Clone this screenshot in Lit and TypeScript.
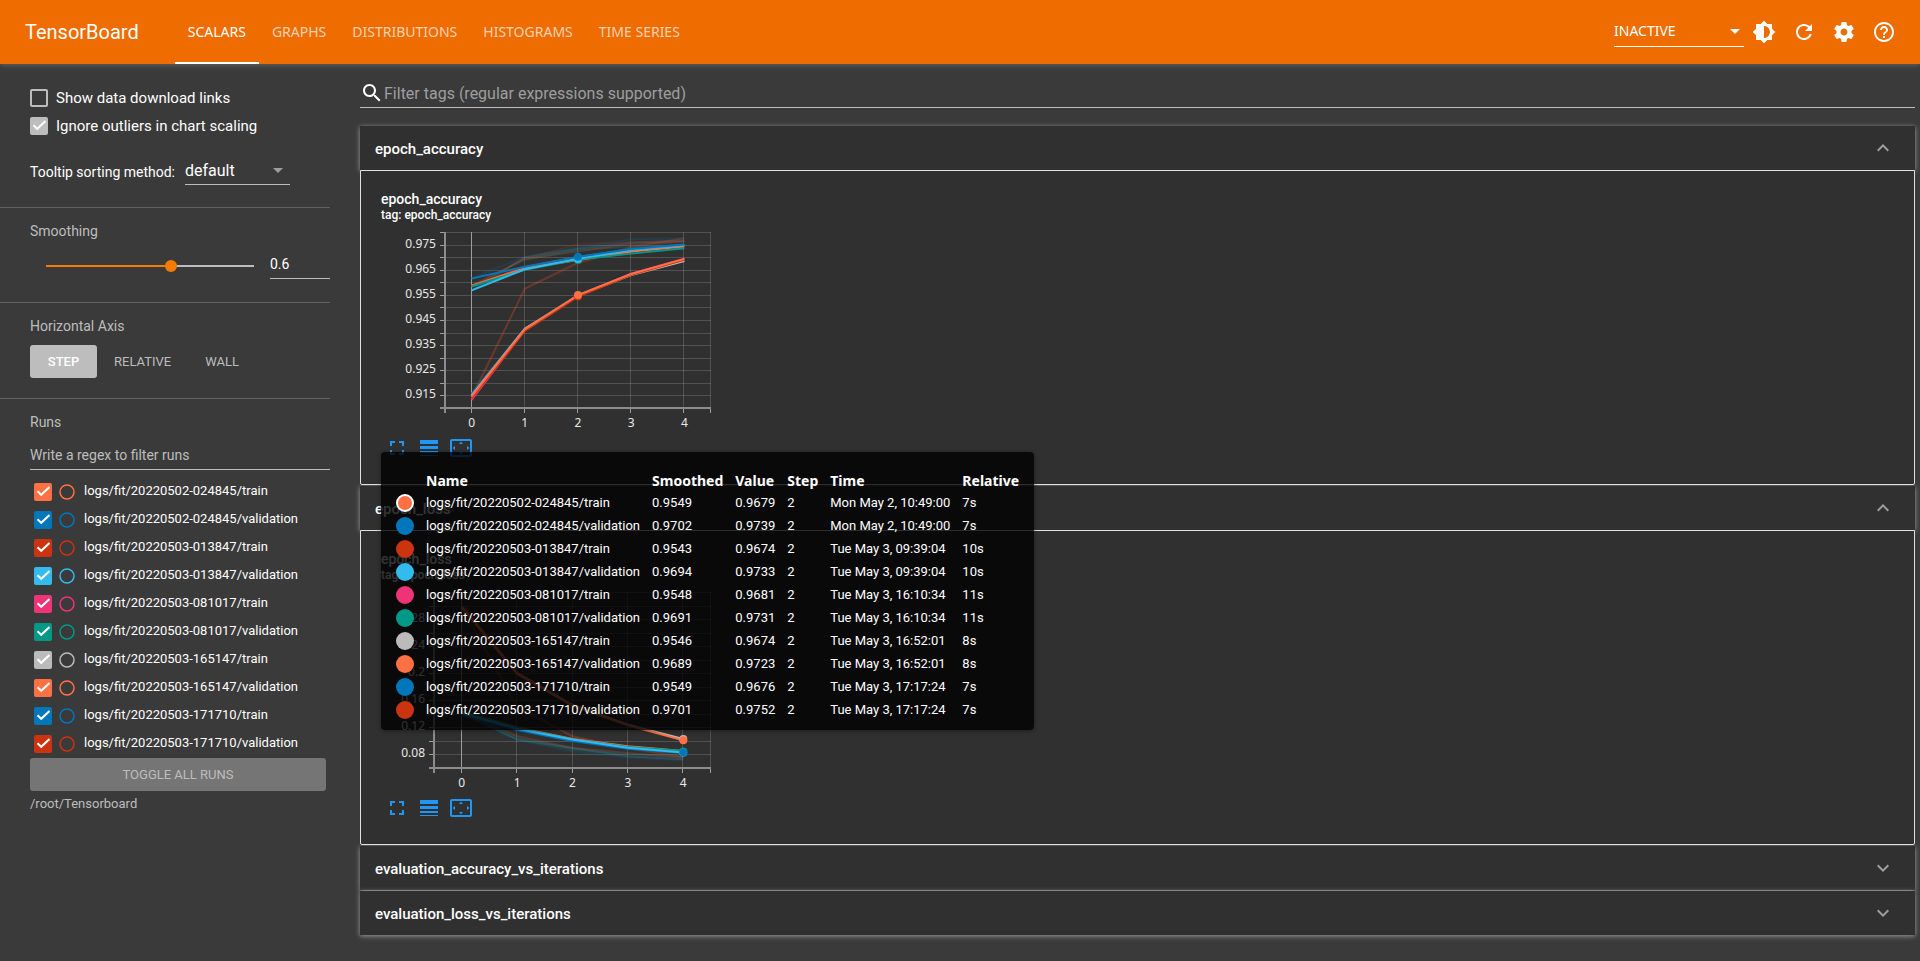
import { LitElement, html, svg, css, nothing } from "lit";
import { customElement, property, state } from "lit/decorators.js";
import { classMap } from "lit/directives/class-map.js";

interface Run {
  name: string;
  color: string;
  smoothed: string;
  value: string;
  time: string;
  relative: string;
}

interface Series {
  color: string;
  values: number[];
  faint?: boolean;
}

interface ChartSpec {
  left: number;
  min: number;
  max: number;
  grid: number;
  labels: string[];
  series: Series[];
  marks: { step: number; value: number; color: string }[];
}

const ORANGE = "#ff7043";
const BLUE = "#0077bb";
const RED = "#cc3311";
const CYAN = "#33bbee";
const PINK = "#ee3377";
const TEAL = "#009988";
const GREY = "#bbbbbb";

const RUNS: Run[] = [
  { name: "logs/fit/20220502-024845/train", color: ORANGE, smoothed: "0.9549", value: "0.9679", time: "Mon May 2, 10:49:00", relative: "7s" },
  { name: "logs/fit/20220502-024845/validation", color: BLUE, smoothed: "0.9702", value: "0.9739", time: "Mon May 2, 10:49:00", relative: "7s" },
  { name: "logs/fit/20220503-013847/train", color: RED, smoothed: "0.9543", value: "0.9674", time: "Tue May 3, 09:39:04", relative: "10s" },
  { name: "logs/fit/20220503-013847/validation", color: CYAN, smoothed: "0.9694", value: "0.9733", time: "Tue May 3, 09:39:04", relative: "10s" },
  { name: "logs/fit/20220503-081017/train", color: PINK, smoothed: "0.9548", value: "0.9681", time: "Tue May 3, 16:10:34", relative: "11s" },
  { name: "logs/fit/20220503-081017/validation", color: TEAL, smoothed: "0.9691", value: "0.9731", time: "Tue May 3, 16:10:34", relative: "11s" },
  { name: "logs/fit/20220503-165147/train", color: GREY, smoothed: "0.9546", value: "0.9674", time: "Tue May 3, 16:52:01", relative: "8s" },
  { name: "logs/fit/20220503-165147/validation", color: ORANGE, smoothed: "0.9689", value: "0.9723", time: "Tue May 3, 16:52:01", relative: "8s" },
  { name: "logs/fit/20220503-171710/train", color: BLUE, smoothed: "0.9549", value: "0.9676", time: "Tue May 3, 17:17:24", relative: "7s" },
  { name: "logs/fit/20220503-171710/validation", color: RED, smoothed: "0.9701", value: "0.9752", time: "Tue May 3, 17:17:24", relative: "7s" },
];

const ACCURACY: ChartSpec = {
  left: 64,
  min: 0.91,
  max: 0.98,
  grid: 0.005,
  labels: ["0.915", "0.925", "0.935", "0.945", "0.955", "0.965", "0.975"],
  series: [
    { color: ORANGE, faint: true, values: [0.9144, 0.9575, 0.9679, 0.974, 0.9775] },
    { color: RED, faint: true, values: [0.9136, 0.9573, 0.9674, 0.9735, 0.9765] },
    { color: BLUE, faint: true, values: [0.9615, 0.9702, 0.9739, 0.9771, 0.9774] },
    { color: CYAN, faint: true, values: [0.9568, 0.9699, 0.9733, 0.9758, 0.9765] },
    { color: TEAL, faint: true, values: [0.9584, 0.9689, 0.9731, 0.974, 0.975] },
    { color: ORANGE, faint: true, values: [0.9586, 0.9693, 0.9723, 0.9752, 0.9761] },
    { color: RED, faint: true, values: [0.9586, 0.9693, 0.9752, 0.9759, 0.9766] },
    { color: RED, values: [0.9586, 0.966, 0.9701, 0.973, 0.9748] },
    { color: BLUE, values: [0.9156, 0.9415, 0.9549, 0.9633, 0.9691] },
    { color: ORANGE, values: [0.9586, 0.9656, 0.9689, 0.9722, 0.9742] },
    { color: GREY, values: [0.9149, 0.9415, 0.9546, 0.9629, 0.9685] },
    { color: TEAL, values: [0.9583, 0.965, 0.9691, 0.9714, 0.9735] },
    { color: PINK, values: [0.9132, 0.9409, 0.9548, 0.9634, 0.9694] },
    { color: CYAN, values: [0.9568, 0.9652, 0.9694, 0.9728, 0.9748] },
    { color: RED, values: [0.9139, 0.9407, 0.9543, 0.963, 0.9689] },
    { color: BLUE, values: [0.9615, 0.9662, 0.9702, 0.9732, 0.975] },
    { color: ORANGE, values: [0.9146, 0.9413, 0.9549, 0.9633, 0.9693] },
  ],
  marks: [
    { step: 2, value: 0.9689, color: TEAL },
    { step: 2, value: 0.9693, color: CYAN },
    { step: 2, value: 0.9702, color: BLUE },
    { step: 2, value: 0.9543, color: RED },
    { step: 2, value: 0.9549, color: ORANGE },
  ],
};

const LOSS: ChartSpec = {
  left: 53,
  min: 0.06,
  max: 0.32,
  grid: 0.02,
  labels: ["0.08", "0.12", "0.16", "0.2", "0.24", "0.28"],
  series: [
    { color: ORANGE, faint: true, values: [0.298, 0.151, 0.107, 0.0895, 0.0765] },
    { color: RED, faint: true, values: [0.3, 0.15, 0.106, 0.0885, 0.0755] },
    { color: BLUE, faint: true, values: [0.14, 0.1015, 0.0845, 0.0755, 0.0715] },
    { color: CYAN, faint: true, values: [0.141, 0.102, 0.0895, 0.0775, 0.073] },
    { color: ORANGE, faint: true, values: [0.143, 0.107, 0.0895, 0.082, 0.075] },
    { color: TEAL, faint: true, values: [0.144, 0.104, 0.087, 0.08, 0.078] },
    { color: RED, values: [0.301, 0.201, 0.153, 0.124, 0.102] },
    { color: ORANGE, values: [0.143, 0.12, 0.103, 0.092, 0.085] },
    { color: TEAL, values: [0.144, 0.119, 0.102, 0.091, 0.085] },
    { color: BLUE, values: [0.139, 0.116, 0.1, 0.0885, 0.082] },
    { color: CYAN, values: [0.141, 0.118, 0.102, 0.09, 0.083] },
    { color: GREY, values: [0.298, 0.2, 0.153, 0.124, 0.103] },
    { color: ORANGE, values: [0.297, 0.199, 0.152, 0.123, 0.101] },
  ],
  marks: [
    { step: 4, value: 0.103, color: GREY },
    { step: 4, value: 0.101, color: ORANGE },
    { step: 4, value: 0.0845, color: TEAL },
    { step: 4, value: 0.0825, color: CYAN },
    { step: 4, value: 0.083, color: BLUE },
  ],
};

const CHART_WIDTH = 330;
const PLOT_TOP = 8;
const PLOT_HEIGHT = 176;

const ICONS = {
  brightness:
    "M20 15.31L23.31 12 20 8.69V4h-4.69L12 .69 8.69 4H4v4.69L.69 12 4 15.31V20h4.69L12 23.31 15.31 20H20v-4.69zM12 18V6c3.31 0 6 2.69 6 6s-2.69 6-6 6z",
  refresh:
    "M17.65 6.35C16.2 4.9 14.21 4 12 4c-4.42 0-7.99 3.58-7.99 8s3.57 8 7.99 8c3.73 0 6.84-2.55 7.73-6h-2.08c-.82 2.33-3.04 4-5.65 4-3.31 0-6-2.69-6-6s2.69-6 6-6c1.66 0 3.14.69 4.22 1.78L13 11h7V4l-2.35 2.35z",
  settings:
    "M19.43 12.98c.04-.32.07-.64.07-.98s-.03-.66-.07-.98l2.11-1.65c.19-.15.24-.42.12-.64l-2-3.46c-.12-.22-.39-.3-.61-.22l-2.49 1c-.52-.4-1.08-.73-1.69-.98l-.38-2.65C14.46 2.18 14.25 2 14 2h-4c-.25 0-.46.18-.49.42l-.38 2.65c-.61.25-1.17.59-1.69.98l-2.49-1c-.23-.09-.49 0-.61.22l-2 3.46c-.13.22-.07.49.12.64l2.11 1.65c-.04.32-.07.65-.07.98s.03.66.07.98l-2.11 1.65c-.19.15-.24.42-.12.64l2 3.46c.12.22.39.3.61.22l2.49-1c.52.4 1.08.73 1.69.98l.38 2.65c.03.24.24.42.49.42h4c.25 0 .46-.18.49-.42l.38-2.65c.61-.25 1.17-.59 1.69-.98l2.49 1c.23.09.49 0 .61-.22l2-3.46c.12-.22.07-.49-.12-.64l-2.11-1.65zM12 15.5c-1.93 0-3.5-1.57-3.5-3.5s1.57-3.5 3.5-3.5 3.5 1.57 3.5 3.5-1.57 3.5-3.5 3.5z",
  help:
    "M11 18h2v-2h-2v2zm1-16C6.48 2 2 6.48 2 12s4.48 10 10 10 10-4.48 10-10S17.52 2 12 2zm0 18c-4.41 0-8-3.59-8-8s3.59-8 8-8 8 3.59 8 8-3.59 8-8 8zm0-14c-2.21 0-4 1.79-4 4h2c0-1.1.9-2 2-2s2 .9 2 2c0 2-3 1.75-3 5h2c0-2.25 3-2.5 3-5 0-2.21-1.79-4-4-4z",
  search:
    "M15.5 14h-.79l-.28-.27C15.41 12.59 16 11.11 16 9.5 16 5.91 13.09 3 9.5 3S3 5.91 3 9.5 5.91 16 9.5 16c1.61 0 3.09-.59 4.23-1.57l.27.28v.79l5 4.99L20.49 19l-4.99-5zm-6 0C7.01 14 5 11.99 5 9.5S7.01 5 9.5 5 14 7.01 14 9.5 11.99 14 9.5 14z",
  fullscreen: "M7 14H5v5h5v-2H7v-3zm-2-4h2V7h3V5H5v5zm12 7h-3v2h5v-5h-2v3zM14 5v2h3v3h2V5h-5z",
  lineWeight: "M3 17h18v-2H3v2zm0 3h18v-1H3v1zm0-7h18v-3H3v3zm0-9v4h18V4H3z",
  overscan:
    "M12.01 5.5L10 8h4l-1.99-2.5zM18 10v4l2.5-1.99L18 10zM6 10l-2.5 2.01L6 14v-4zm8 6h-4l2.01 2.5L14 16zm7-13H3c-1.1 0-2 .9-2 2v14c0 1.1.9 2 2 2h18c1.1 0 2-.9 2-2V5c0-1.1-.9-2-2-2zm0 16.01H3V4.99h18v14.02z",
  caret: "M7 10l5 5 5-5z",
  expandMore: "M16.59 8.59L12 13.17 7.41 8.59 6 10l6 6 6-6z",
  expandLess: "M12 8l-6 6 1.41 1.41L12 10.83l4.59 4.58L18 14z",
};

const icon = (path: string) => html`<svg class="icon" viewBox="0 0 24 24" aria-hidden="true"><path d=${path}></path></svg>`;

const controlReset = css`
  * {
    box-sizing: border-box;
  }
  button,
  input,
  select {
    font: inherit;
    color: inherit;
    margin: 0;
    padding: 0;
    border: 0;
    border-radius: 0;
    background: none;
    appearance: none;
    outline: none;
  }
  button {
    cursor: pointer;
  }
  .icon {
    display: block;
    width: 24px;
    height: 24px;
    fill: currentColor;
    flex: none;
  }
`;

@customElement("tb-header")
class TbHeader extends LitElement {
  static styles = [
    controlReset,
    css`
      :host {
        display: flex;
        align-items: center;
        height: 64px;
        padding: 0 24px 0 25px;
        background: #ef6c00;
        color: #fff;
        font-family: "Noto Sans", sans-serif;
        box-shadow: 0 1px 6px rgba(255, 255, 255, 0.22);
      }
      .brand {
        font-family: Roboto, sans-serif;
        font-size: 20px;
        margin-right: 36px;
      }
      .tabs {
        display: flex;
        align-self: stretch;
      }
      .tab {
        display: flex;
        align-items: center;
        padding: 0 13px;
        border-bottom: 2px solid transparent;
        color: rgba(255, 255, 255, 0.7);
        font-size: 14px;
        text-decoration: none;
      }
      .active {
        color: #fff;
        border-bottom-color: #fff;
      }
      .picker {
        display: grid;
        align-items: center;
        width: 130px;
        height: 30px;
        padding-bottom: 2px;
        margin-left: auto;
        border-bottom: 1px solid #fff;
        font-size: 14px;
      }
      .picker select,
      .picker .icon {
        grid-area: 1 / 1;
      }
      .picker select {
        width: 100%;
      }
      .picker .icon {
        justify-self: end;
        margin-right: -3px;
        pointer-events: none;
      }
      .actions {
        display: flex;
        gap: 16px;
        margin-left: 8px;
      }
    `,
  ];

  render() {
    const tabs = ["SCALARS", "GRAPHS", "DISTRIBUTIONS", "HISTOGRAMS", "TIME SERIES"];
    return html`
      <div class="brand">TensorBoard</div>
      <nav class="tabs">
        ${tabs.map((t, i) => html`<a class=${classMap({ tab: true, active: i === 0 })} href="#">${t}</a>`)}
      </nav>
      <label class="picker">
        <select aria-label="Inactive dashboards"><option>INACTIVE</option></select>
        ${icon(ICONS.caret)}
      </label>
      <div class="actions">
        <button aria-label="Toggle theme">${icon(ICONS.brightness)}</button>
        <button aria-label="Reload">${icon(ICONS.refresh)}</button>
        <button aria-label="Settings">${icon(ICONS.settings)}</button>
        <button aria-label="Help">${icon(ICONS.help)}</button>
      </div>
    `;
  }
}

@customElement("tb-sidebar")
class TbSidebar extends LitElement {
  @state() smoothing = 0.6;
  @state() axis = "STEP";

  static styles = [
    controlReset,
    css`
      :host {
        display: block;
        flex: none;
        width: 330px;
        font-size: 13px;
        color: #fff;
      }
      section {
        padding-left: 30px;
        border-bottom: 1px solid #616161;
      }
      section:last-child {
        border-bottom: 0;
      }
      .check {
        display: flex;
        align-items: center;
        gap: 8px;
        height: 28px;
        font-size: 15px;
      }
      input[type="checkbox"] {
        flex: none;
        width: 18px;
        height: 18px;
        border: 2px solid var(--tone, #bdbdbd);
        border-radius: 2px;
      }
      input[type="checkbox"]:checked {
        background: var(--tone, #bdbdbd)
          url("data:image/svg+xml,%3Csvg xmlns='http://www.w3.org/2000/svg' viewBox='0 0 18 18'%3E%3Cpath d='M3.5 8.2L7.2 11.8L15.5 4' fill='none' stroke='white' stroke-width='2'/%3E%3C/svg%3E")
          border-box;
      }
      .options {
        padding-top: 20px;
      }
      .sorting {
        display: flex;
        align-items: center;
        gap: 10px;
        padding: 18px 0 22px;
        font-size: 14px;
      }
      .picker {
        display: grid;
        align-items: center;
        width: 105px;
        height: 27px;
        padding-bottom: 3px;
        border-bottom: 1px solid #bdbdbd;
        font-size: 16px;
      }
      .picker select,
      .picker .icon {
        grid-area: 1 / 1;
      }
      .picker select {
        width: 100%;
      }
      .picker .icon {
        justify-self: end;
        color: #9e9e9e;
        pointer-events: none;
      }
      h3 {
        margin: 0;
        padding-top: 14px;
        font-size: 14px;
        line-height: 18px;
        font-weight: 400;
        color: #bdbdbd;
      }
      .smoothing {
        display: flex;
        align-items: center;
        gap: 10px;
        padding: 11px 0 23px 10px;
      }
      input[type="range"] {
        flex: 1;
        min-width: 0;
        height: 12px;
        margin-top: 2px;
        background:
          linear-gradient(#f57c00, #f57c00) 6px 50% / calc((100% - 12px) * var(--filled)) 2px no-repeat,
          linear-gradient(#bdbdbd, #bdbdbd) 50% 50% / calc(100% - 12px) 2px no-repeat;
      }
      input[type="range"]::-webkit-slider-thumb {
        appearance: none;
        width: 12px;
        height: 12px;
        border-radius: 50%;
        background: #f57c00;
      }
      .amount {
        width: 60px;
        height: 28px;
        padding-bottom: 2px;
        border-bottom: 1px solid #bdbdbd;
        font-size: 14px;
      }
      .axes {
        display: flex;
        padding: 10px 0 20px;
      }
      .axes button {
        min-width: 67px;
        height: 33px;
        padding: 0 17px;
        border-radius: 3px;
        color: #bdbdbd;
      }
      .axes .chosen {
        background: #bdbdbd;
        color: #fff;
        font-weight: 500;
      }
      .regex {
        width: 100%;
        height: 30px;
        margin: 9px 0 8px;
        border-bottom: 1px solid #bdbdbd;
        font-size: 14px;
      }
      .regex::placeholder {
        color: #bdbdbd;
        opacity: 1;
      }
      .run {
        display: flex;
        align-items: center;
        height: 28px;
        padding-left: 4px;
      }
      .only {
        display: grid;
        margin: 0 8px 0 6px;
      }
      .only input,
      .only svg {
        grid-area: 1 / 1;
        width: 18px;
        height: 18px;
      }
      .only circle {
        fill: none;
        stroke: var(--tone);
        stroke-width: 1.5;
      }
      .name {
        padding-bottom: 4px;
      }
      .toggle {
        width: calc(100% - 4px);
        height: 33px;
        border-radius: 3px;
        background: #757575;
        color: #bdbdbd;
      }
      .path {
        padding-top: 4px;
        line-height: 18px;
        color: #bdbdbd;
      }
    `,
  ];

  render() {
    return html`
      <section class="options">
        <label class="check"><input type="checkbox" />Show data download links</label>
        <label class="check"><input type="checkbox" checked />Ignore outliers in chart scaling</label>
        <div class="sorting">
          <label for="sort">Tooltip sorting method:</label>
          <div class="picker">
            <select id="sort"><option>default</option></select>
            ${icon(ICONS.caret)}
          </div>
        </div>
      </section>
      <section>
        <h3 id="smooth">Smoothing</h3>
        <div class="smoothing">
          <input
            type="range"
            aria-labelledby="smooth"
            min="0"
            max="1"
            step="0.1"
            .value=${String(this.smoothing)}
            style="--filled:${this.smoothing}"
            @input=${(e: Event) => (this.smoothing = Number((e.target as HTMLInputElement).value))}
          />
          <input class="amount" aria-labelledby="smooth" .value=${String(this.smoothing)} />
        </div>
      </section>
      <section>
        <h3>Horizontal Axis</h3>
        <div class="axes">
          ${["STEP", "RELATIVE", "WALL"].map(
            (a) => html`<button class=${a === this.axis ? "chosen" : ""} @click=${() => (this.axis = a)}>${a}</button>`,
          )}
        </div>
      </section>
      <section>
        <h3>Runs</h3>
        <input class="regex" aria-label="Filter runs" placeholder="Write a regex to filter runs" />
        ${RUNS.map(
          (r, i) => html`
            <div class="run" style="--tone:${r.color}">
              <input type="checkbox" id="run-${i}" checked />
              <label class="only">
                <input type="radio" name="only" aria-label="Show only ${r.name}" />
                <svg viewBox="0 0 18 18" aria-hidden="true"><circle cx="9" cy="9" r="7"></circle></svg>
              </label>
              <label class="name" for="run-${i}">${r.name}</label>
            </div>
          `,
        )}
        <button class="toggle">TOGGLE ALL RUNS</button>
        <div class="path">/root/Tensorboard</div>
      </section>
    `;
  }
}

@customElement("tb-chart")
class TbChart extends LitElement {
  @property({ attribute: false }) spec!: ChartSpec;

  static styles = css`
    :host {
      display: block;
    }
    svg {
      display: block;
    }
    .grid {
      stroke: #fff;
      stroke-opacity: 0.16;
      stroke-width: 1;
    }
    .axis {
      stroke: #8c8c8c;
      stroke-width: 2;
    }
    .tick {
      stroke: #9e9e9e;
      stroke-width: 1;
    }
    .line {
      fill: none;
      stroke-width: 2;
    }
    .faint {
      stroke-opacity: 0.18;
    }
    text {
      fill: #e8e8e8;
      font-family: "Noto Sans", sans-serif;
      font-size: 12px;
    }
  `;

  render() {
    const { left, min, max, grid, labels, series, marks } = this.spec;
    const bottom = PLOT_TOP + PLOT_HEIGHT;
    const plotWidth = CHART_WIDTH - left;
    const x = (step: number) => left + ((step + 0.5) / 5) * plotWidth;
    const y = (value: number) => PLOT_TOP + ((max - value) / (max - min)) * PLOT_HEIGHT;
    const rows = Array.from({ length: Math.round((max - min) / grid) + 1 }, (_, i) => Math.round(y(min + i * grid)));
    const steps = [0, 1, 2, 3, 4];
    return html`
      <svg width=${CHART_WIDTH} height="212" role="img">
        ${rows.map(
          (r) => svg`
            <line class="grid" x1=${left} x2=${CHART_WIDTH} y1=${r + 0.5} y2=${r + 0.5}></line>
            <line class="tick" x1=${left - 5} x2=${left} y1=${r + 0.5} y2=${r + 0.5}></line>`,
        )}
        ${[...steps, 4.5].map((s) => {
          const c = Math.round(x(s)) - 0.5;
          return svg`
            <line class=${s === 0 ? "tick" : "grid"} x1=${c} x2=${c} y1=${PLOT_TOP} y2=${bottom}></line>
            <line class="tick" x1=${c} x2=${c} y1=${bottom} y2=${bottom + 5}></line>`;
        })}
        ${series.map(
          (s) => svg`<polyline class=${s.faint ? "line faint" : "line"} stroke=${s.color}
            points=${s.values.map((v, i) => `${x(i)},${y(v)}`).join(" ")}></polyline>`,
        )}
        <line class="axis" x1=${left} x2=${left} y1=${PLOT_TOP} y2=${bottom + 5}></line>
        <line class="axis" x1=${left - 5} x2=${CHART_WIDTH} y1=${bottom} y2=${bottom}></line>
        ${marks.map((m) => svg`<circle cx=${x(m.step)} cy=${y(m.value)} r="4" fill=${m.color}></circle>`)}
        ${labels.map((l) => svg`<text text-anchor="end" x=${left - 9} y=${Math.round(y(Number(l))) + 3}>${l}</text>`)}
        ${steps.map((s) => svg`<text text-anchor="middle" x=${x(s)} y=${bottom + 19}>${s}</text>`)}
      </svg>
    `;
  }
}

@customElement("tb-tooltip")
class TbTooltip extends LitElement {
  static styles = css`
    :host {
      display: block;
      padding: 18px 15px 9px;
      border-radius: 4px;
      background: rgba(0, 0, 0, 0.8);
      box-shadow: 0 1px 4px rgba(0, 0, 0, 0.4);
      color: #fff;
      font-size: 13px;
    }
    table {
      border-collapse: collapse;
    }
    th {
      height: 21px;
      padding: 0 0 0 12px;
      font-family: "Noto Sans", sans-serif;
      font-size: 14px;
      line-height: 20px;
      font-weight: 700;
      text-align: left;
    }
    td {
      height: 23px;
      padding: 0 0 0 12px;
      line-height: 18px;
      white-space: nowrap;
    }
    th:first-child,
    td:first-child {
      padding: 0;
    }
    .swatch {
      display: block;
      box-sizing: border-box;
      width: 18px;
      height: 18px;
      border-radius: 50%;
    }
    .closest .swatch {
      border: 2px solid #fff;
    }
  `;

  render() {
    return html`
      <table>
        <thead>
          <tr>
            <th></th>
            ${["Name", "Smoothed", "Value", "Step", "Time", "Relative"].map((h) => html`<th>${h}</th>`)}
          </tr>
        </thead>
        <tbody>
          ${RUNS.map(
            (r, i) => html`
              <tr class=${i === 0 ? "closest" : ""}>
                <td><span class="swatch" style="background:${r.color}"></span></td>
                <td>${r.name}</td>
                <td>${r.smoothed}</td>
                <td>${r.value}</td>
                <td>2</td>
                <td>${r.time}</td>
                <td>${r.relative}</td>
              </tr>
            `,
          )}
        </tbody>
      </table>
    `;
  }
}

@customElement("tb-panel")
class TbPanel extends LitElement {
  @property() name = "";
  @property({ attribute: false }) spec?: ChartSpec;
  @property({ type: Boolean }) hovered = false;
  @state() open = true;

  static styles = [
    controlReset,
    css`
      :host {
        display: block;
        margin-bottom: 1px;
        color: #fff;
      }
      .heading {
        display: flex;
        align-items: center;
        justify-content: space-between;
        width: 100%;
        height: 44px;
        padding: 0 20px 0 15px;
        background: #303030;
        box-shadow: 0 1px 5px rgba(255, 255, 255, 0.5);
        font-size: 15px;
        font-weight: 500;
      }
      .heading span {
        padding-top: 2px;
      }
      .heading .icon {
        color: #9e9e9e;
      }
      .body {
        position: relative;
        height: 315px;
        padding: 20px;
        border: 1px solid #e0e0e0;
        border-radius: 0 0 2px 2px;
        background: #303030;
      }
      .title {
        font-size: 14px;
        line-height: 17px;
        font-weight: 500;
      }
      .tag {
        font-size: 12px;
        line-height: 14px;
        font-weight: 500;
        padding-bottom: 2px;
      }
      .tools {
        display: flex;
        gap: 8px;
        padding-left: 4px;
        color: #2196f3;
      }
      tb-tooltip {
        position: absolute;
        z-index: 2;
        top: 281px;
        left: 20px;
      }
    `,
  ];

  render() {
    const open = this.open && !!this.spec;
    return html`
      <button class="heading" aria-expanded=${open} @click=${() => (this.open = !this.open)}>
        <span>${this.name}</span> ${icon(open ? ICONS.expandLess : ICONS.expandMore)}
      </button>
      ${open
        ? html`
            <div class="body">
              <div class="title">${this.name}</div>
              <div class="tag">tag: ${this.name}</div>
              <tb-chart .spec=${this.spec!}></tb-chart>
              <div class="tools">
                <button aria-label="Toggle size">${icon(ICONS.fullscreen)}</button>
                <button aria-label="Toggle log scale">${icon(ICONS.lineWeight)}</button>
                <button aria-label="Fit domain to data">${icon(ICONS.overscan)}</button>
              </div>
              ${this.hovered ? html`<tb-tooltip></tb-tooltip>` : nothing}
            </div>
          `
        : nothing}
    `;
  }
}

@customElement("app-root")
class AppRoot extends LitElement {
  static styles = [
    controlReset,
    css`
      :host {
        display: flex;
        flex-direction: column;
        min-height: 100vh;
        background: #3a3a3a;
        font-family: Roboto, sans-serif;
        font-size: 14px;
      }
      .page {
        display: flex;
        gap: 30px;
        padding-right: 5px;
      }
      main {
        flex: 1;
        min-width: 0;
        padding-top: 15px;
      }
      .filter {
        display: flex;
        align-items: center;
        height: 29px;
        margin-bottom: 18px;
        border-bottom: 1px solid #bdbdbd;
        color: #fff;
        font-size: 16px;
      }
      .filter input {
        flex: 1;
      }
      .filter input::placeholder {
        color: #9e9e9e;
        opacity: 1;
      }
    `,
  ];

  render() {
    return html`
      <tb-header></tb-header>
      <div class="page">
        <tb-sidebar></tb-sidebar>
        <main>
          <label class="filter">
            ${icon(ICONS.search)}
            <input aria-label="Filter tags" placeholder="Filter tags (regular expressions supported)" />
          </label>
          <tb-panel name="epoch_accuracy" .spec=${ACCURACY} hovered></tb-panel>
          <tb-panel name="epoch_loss" .spec=${LOSS}></tb-panel>
          <tb-panel name="evaluation_accuracy_vs_iterations"></tb-panel>
          <tb-panel name="evaluation_loss_vs_iterations"></tb-panel>
        </main>
      </div>
    `;
  }
}
